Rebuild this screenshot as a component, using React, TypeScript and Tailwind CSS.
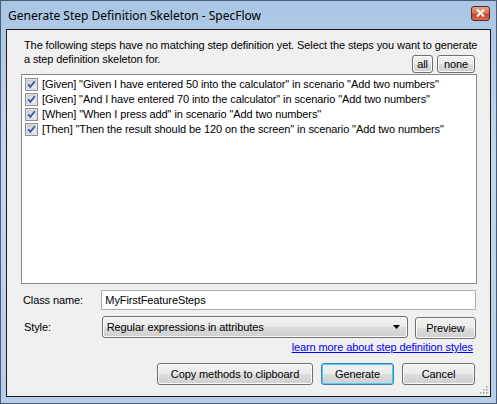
import React, { useState } from 'react'

const steps = [
  '[Given] "Given I have entered 50 into the calculator" in scenario "Add two numbers"',
  '[Given] "And I have entered 70 into the calculator" in scenario "Add two numbers"',
  '[When] "When I press add" in scenario "Add two numbers"',
  '[Then] "Then the result should be 120 on the screen" in scenario "Add two numbers"',
]

const face =
  'rounded-[3px] border bg-[linear-gradient(#f2f2f2_0%,#ebebeb_49%,#dddddd_50%,#cfcfcf_100%)] text-black'
const btn = `${face} flex items-center justify-center border-[#707070] shadow-[inset_0_0_0_1px_#fcfcfc]`

function CheckBox({ checked }: { checked: boolean }) {
  return (
    <svg width="13" height="13" viewBox="0 0 13 13" className="shrink-0">
      <defs>
        <linearGradient id="cbg" x1="0" y1="0" x2="1" y2="1">
          <stop offset="0" stopColor="#cbcfd5" />
          <stop offset="1" stopColor="#f6f6f6" />
        </linearGradient>
      </defs>
      <rect x="0.5" y="0.5" width="12" height="12" fill="#f4f4f4" stroke="#8e8f8f" />
      <rect x="2" y="2" width="9" height="9" fill="url(#cbg)" stroke="#b3b8bf" strokeWidth="0.6" />
      {checked && (
        <path d="M3.2 6.4 L5.4 8.8 L9.8 3.2" fill="none" stroke="#3a54a0" strokeWidth="1.8" />
      )}
    </svg>
  )
}

export default function App() {
  const [checked, setChecked] = useState([true, true, true, true])
  const [cls, setCls] = useState('MyFirstFeatureSteps')

  return (
    <div
      className="w-[497px] h-[404px] flex flex-col border border-[#4a5d74] bg-[linear-gradient(180deg,#a9c6e4_0%,#c3d8ee_40%,#b6cee8_100%)] text-[11px] tracking-[-0.1px] text-black"
      style={{ fontFamily: '"Liberation Sans", Arial, sans-serif' }}
    >
      {/* title bar */}
      <div className="h-[28px] shrink-0 flex items-center justify-between pl-[7px] pr-[6px]">
        <span className="text-[12px] tracking-normal leading-none mt-[1px]" style={{ fontFamily: '"Noto Sans", sans-serif' }}>
          Generate Step Definition Skeleton - SpecFlow
        </span>
        <div className="w-[19px] h-[15px] mt-[-4px] rounded-[3px] border border-[#5a2a20] bg-[linear-gradient(#e8a08c_0%,#d3694f_50%,#c2401f_51%,#d86a4d_100%)] flex items-center justify-center">
          <svg width="9" height="8" viewBox="0 0 9 8">
            <path d="M1 0.5 L8 7.5 M8 0.5 L1 7.5" stroke="#fff" strokeWidth="2" />
          </svg>
        </div>
      </div>

      {/* client area */}
      <div className="mx-[5px] mb-[6px] flex-1 border border-[#1a1a1a] bg-[#f0f0f0] px-[14px] pt-[8px] relative">
        <div className="pl-[3px] leading-[14px] whitespace-nowrap">
          The following steps have no matching step definition yet. Select the steps you want to generate
        </div>
        <div className="h-[22px] flex justify-between items-end">
          <span className="pl-[3px] leading-[14px] self-start">a step definition skeleton for.</span>
          <div className="flex gap-[4px] mb-[1px] mr-[1px]">
            <button className={`${btn} h-[18px] w-[21px] leading-none`} onClick={() => setChecked([true, true, true, true])}>
              all
            </button>
            <button className={`${btn} h-[18px] w-[38px] leading-none`} onClick={() => setChecked([false, false, false, false])}>
              none
            </button>
          </div>
        </div>

        <div className="h-[210px] w-[456px] border border-[#828790] bg-white pt-[2px] pl-[3px]">
          {steps.map((s, i) => (
            <div
              key={i}
              className="h-[15px] flex items-center gap-[4px] whitespace-nowrap"
              onClick={() => setChecked(checked.map((c, j) => (j === i ? !c : c)))}
            >
              <CheckBox checked={checked[i]} />
              <span className="leading-none">{s}</span>
            </div>
          ))}
        </div>

        <div className="mt-[6px] flex items-center">
          <span className="w-[83px] pl-[2px]">Class name:</span>
          <input
            value={cls}
            onChange={(e) => setCls(e.target.value)}
            className="h-[20px] w-[387px] border border-[#abadb3] bg-white px-[3px] outline-none text-[11px]"
          />
        </div>

        <div className="mt-[6px] flex items-start">
          <span className="w-[83px] pl-[3px] leading-[22px]">Style:</span>
          <div className={`${face} border-[#707070] shadow-[inset_0_0_0_1px_#fcfcfc] h-[22px] w-[315px] flex items-center justify-between pl-[4px] pr-[7px]`}>
            <span>Regular expressions in attributes</span>
            <svg width="7" height="4" viewBox="0 0 7 4">
              <path d="M0 0 H7 L3.5 4 Z" fill="#000" />
            </svg>
          </div>
          <button className={`${btn} h-[22px] w-[63px] ml-[7px] mt-[1px]`}>Preview</button>
        </div>

        <div className="flex justify-end pr-[3px] mt-[1px]">
          <a href="#" className="text-[#0000ff] underline leading-[14px]">
            learn more about step definition styles
          </a>
        </div>

        <div className="mt-[9px] flex justify-end gap-[8px] pr-[1px]">
          <button className={`${btn} h-[22px] w-[156px]`}>Copy methods to clipboard</button>
          <button className={`${face} flex items-center justify-center h-[22px] w-[73px] border-[#3c7fb1] shadow-[inset_0_0_0_1px_#48d2fb]`}>Generate</button>
          <button className={`${btn} h-[22px] w-[73px]`}>Cancel</button>
        </div>

        {/* size grip */}
        <svg width="9" height="9" viewBox="0 0 9 9" className="absolute right-[2px] bottom-[2px]">
          {[
            [7, 1],
            [7, 4],
            [4, 4],
            [7, 7],
            [4, 7],
            [1, 7],
          ].map(([x, y], i) => (
            <rect key={i} x={x} y={y} width="1.5" height="1.5" fill="#a0a0a0" />
          ))}
        </svg>
      </div>
    </div>
  )
}
